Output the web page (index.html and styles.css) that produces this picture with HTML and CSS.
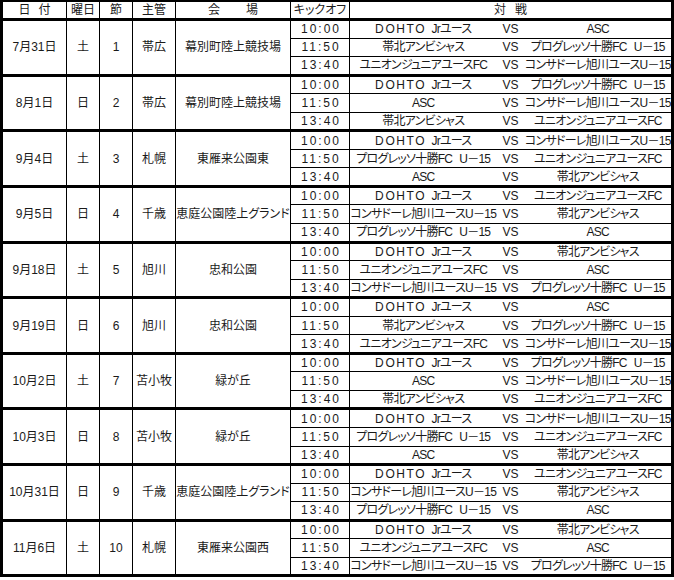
FILE: index.html
```html
<!DOCTYPE html>
<html lang="ja">
<head>
<meta charset="utf-8">
<title>日程表</title>
<link rel="stylesheet" href="styles.css">
</head>
<body>
<table class="sched">
  <colgroup>
    <col class="c-date"><col class="c-dow"><col class="c-sec"><col class="c-host"><col class="c-venue"><col class="c-time"><col class="c-home"><col class="c-vs"><col class="c-away">
  </colgroup>
  <thead>
    <tr class="head">
      <th>日<span class="g g-date"></span>付</th><th>曜日</th><th>節</th><th>主管</th><th>会<span class="g g-venue"></span>場</th><th class="ko">キックオフ</th><th colspan="3">対<span class="g g-match"></span>戦</th>
    </tr>
  </thead>
  <tbody>
    <tr class="r first"><td rowspan="3">7月31日</td><td rowspan="3">土</td><td rowspan="3">1</td><td rowspan="3">帯広</td><td rowspan="3">幕別町陸上競技場</td><td class="t">10:00</td><td><span class="ls">DOHTO</span>&nbsp;&nbsp;Jrユース</td><td>VS</td><td>ASC</td></tr>
    <tr class="r"><td class="t">11:50</td><td>帯北アンビシャス</td><td>VS</td><td>プログレッソ十勝FC<span class="sp"></span>U－15</td></tr>
    <tr class="r last"><td class="t">13:40</td><td>ユニオンジュニアユースFC</td><td>VS</td><td>コンサドーレ旭川ユースU－15</td></tr>

    <tr class="r first"><td rowspan="3">8月1日</td><td rowspan="3">日</td><td rowspan="3">2</td><td rowspan="3">帯広</td><td rowspan="3">幕別町陸上競技場</td><td class="t">10:00</td><td><span class="ls">DOHTO</span>&nbsp;&nbsp;Jrユース</td><td>VS</td><td>プログレッソ十勝FC<span class="sp"></span>U－15</td></tr>
    <tr class="r"><td class="t">11:50</td><td>ASC</td><td>VS</td><td>コンサドーレ旭川ユースU－15</td></tr>
    <tr class="r last"><td class="t">13:40</td><td>帯北アンビシャス</td><td>VS</td><td>ユニオンジュニアユースFC</td></tr>

    <tr class="r first"><td rowspan="3">9月4日</td><td rowspan="3">土</td><td rowspan="3">3</td><td rowspan="3">札幌</td><td rowspan="3">東雁来公園東</td><td class="t">10:00</td><td><span class="ls">DOHTO</span>&nbsp;&nbsp;Jrユース</td><td>VS</td><td>コンサドーレ旭川ユースU－15</td></tr>
    <tr class="r"><td class="t">11:50</td><td>プログレッソ十勝FC<span class="sp"></span>U－15</td><td>VS</td><td>ユニオンジュニアユースFC</td></tr>
    <tr class="r last"><td class="t">13:40</td><td>ASC</td><td>VS</td><td>帯北アンビシャス</td></tr>

    <tr class="r first"><td rowspan="3">9月5日</td><td rowspan="3">日</td><td rowspan="3">4</td><td rowspan="3">千歳</td><td rowspan="3">恵庭公園陸上グランド</td><td class="t">10:00</td><td><span class="ls">DOHTO</span>&nbsp;&nbsp;Jrユース</td><td>VS</td><td>ユニオンジュニアユースFC</td></tr>
    <tr class="r"><td class="t">11:50</td><td>コンサドーレ旭川ユースU－15</td><td>VS</td><td>帯北アンビシャス</td></tr>
    <tr class="r last"><td class="t">13:40</td><td>プログレッソ十勝FC<span class="sp"></span>U－15</td><td>VS</td><td>ASC</td></tr>

    <tr class="r first"><td rowspan="3">9月18日</td><td rowspan="3">土</td><td rowspan="3">5</td><td rowspan="3">旭川</td><td rowspan="3">忠和公園</td><td class="t">10:00</td><td><span class="ls">DOHTO</span>&nbsp;&nbsp;Jrユース</td><td>VS</td><td>帯北アンビシャス</td></tr>
    <tr class="r"><td class="t">11:50</td><td>ユニオンジュニアユースFC</td><td>VS</td><td>ASC</td></tr>
    <tr class="r last"><td class="t">13:40</td><td>コンサドーレ旭川ユースU－15</td><td>VS</td><td>プログレッソ十勝FC<span class="sp"></span>U－15</td></tr>

    <tr class="r first"><td rowspan="3">9月19日</td><td rowspan="3">日</td><td rowspan="3">6</td><td rowspan="3">旭川</td><td rowspan="3">忠和公園</td><td class="t">10:00</td><td><span class="ls">DOHTO</span>&nbsp;&nbsp;Jrユース</td><td>VS</td><td>ASC</td></tr>
    <tr class="r"><td class="t">11:50</td><td>帯北アンビシャス</td><td>VS</td><td>プログレッソ十勝FC<span class="sp"></span>U－15</td></tr>
    <tr class="r last"><td class="t">13:40</td><td>ユニオンジュニアユースFC</td><td>VS</td><td>コンサドーレ旭川ユースU－15</td></tr>

    <tr class="r first"><td rowspan="3">10月2日</td><td rowspan="3">土</td><td rowspan="3">7</td><td rowspan="3">苫小牧</td><td rowspan="3">緑が丘</td><td class="t">10:00</td><td><span class="ls">DOHTO</span>&nbsp;&nbsp;Jrユース</td><td>VS</td><td>プログレッソ十勝FC<span class="sp"></span>U－15</td></tr>
    <tr class="r"><td class="t">11:50</td><td>ASC</td><td>VS</td><td>コンサドーレ旭川ユースU－15</td></tr>
    <tr class="r last"><td class="t">13:40</td><td>帯北アンビシャス</td><td>VS</td><td>ユニオンジュニアユースFC</td></tr>

    <tr class="r first"><td rowspan="3">10月3日</td><td rowspan="3">日</td><td rowspan="3">8</td><td rowspan="3">苫小牧</td><td rowspan="3">緑が丘</td><td class="t">10:00</td><td><span class="ls">DOHTO</span>&nbsp;&nbsp;Jrユース</td><td>VS</td><td>コンサドーレ旭川ユースU－15</td></tr>
    <tr class="r"><td class="t">11:50</td><td>プログレッソ十勝FC<span class="sp"></span>U－15</td><td>VS</td><td>ユニオンジュニアユースFC</td></tr>
    <tr class="r last"><td class="t">13:40</td><td>ASC</td><td>VS</td><td>帯北アンビシャス</td></tr>

    <tr class="r first"><td rowspan="3">10月31日</td><td rowspan="3">日</td><td rowspan="3">9</td><td rowspan="3">千歳</td><td rowspan="3">恵庭公園陸上グランド</td><td class="t">10:00</td><td><span class="ls">DOHTO</span>&nbsp;&nbsp;Jrユース</td><td>VS</td><td>ユニオンジュニアユースFC</td></tr>
    <tr class="r"><td class="t">11:50</td><td>コンサドーレ旭川ユースU－15</td><td>VS</td><td>帯北アンビシャス</td></tr>
    <tr class="r last"><td class="t">13:40</td><td>プログレッソ十勝FC<span class="sp"></span>U－15</td><td>VS</td><td>ASC</td></tr>

    <tr class="r first"><td rowspan="3">11月6日</td><td rowspan="3">土</td><td rowspan="3">10</td><td rowspan="3">札幌</td><td rowspan="3">東雁来公園西</td><td class="t">10:00</td><td><span class="ls">DOHTO</span>&nbsp;&nbsp;Jrユース</td><td>VS</td><td>帯北アンビシャス</td></tr>
    <tr class="r"><td class="t">11:50</td><td>ユニオンジュニアユースFC</td><td>VS</td><td>ASC</td></tr>
    <tr class="r last"><td class="t">13:40</td><td>コンサドーレ旭川ユースU－15</td><td>VS</td><td>プログレッソ十勝FC<span class="sp"></span>U－15</td></tr>
  </tbody>
</table>
</body>
</html>
```

FILE: styles.css
```css
html, body {
  margin: 0;
  padding: 0;
  background: #fff;
}

.sched {
  border-collapse: collapse;
  table-layout: fixed;
  width: 674px;
  font-family: "Liberation Sans", "Noto Sans CJK JP", sans-serif;
  font-size: 12px;
  line-height: 14px;
  color: #1a1a1a;
  border: 3px solid #000;
  border-top-width: 2px;
  font-feature-settings: "palt";
}

.c-date { width: 65px; }
.c-dow { width: 33px; }
.c-sec { width: 33px; }
.c-host { width: 43px; }
.c-venue { width: 115px; }
.c-time { width: 59px; }
.c-home { width: 147px; }
.c-vs { width: 28px; }
.c-away { width: 148px; }

.sched th,
.sched td {
  padding: 0;
  text-align: center;
  vertical-align: middle;
  white-space: nowrap;
  overflow: visible;
  font-weight: normal;
}

.g {
  display: inline-block;
}

.g-date { width: 8px; }
.g-venue { width: 26px; }
.g-match { width: 9px; }

.sp {
  display: inline-block;
  width: 7px;
}

.head th {
  border-left: 1px solid #000;
  border-right: 1px solid #000;
  border-bottom: 3px solid #000;
}

.head {
  height: 18.5px;
}

.r {
  height: 18.55px;
}

.r td {
  border-left: 1px solid #000;
  border-right: 1px solid #000;
  border-top: 1px solid #000;
}

.r td:nth-last-child(-n+3) {
  border-left: 0;
  border-right: 0;
  letter-spacing: -0.75px;
}

.r td:nth-last-child(2) {
  letter-spacing: 0;
}

.r td:last-child {
  border-right: 3px solid #000;
}

.r td:nth-last-child(3) {
  border-left: 1px solid #000;
}

.first td {
  border-top: 3px solid #000;
}

.t {
  letter-spacing: 2px;
  text-indent: 2px;
}

.ls {
  letter-spacing: 1.6px;
}
```
